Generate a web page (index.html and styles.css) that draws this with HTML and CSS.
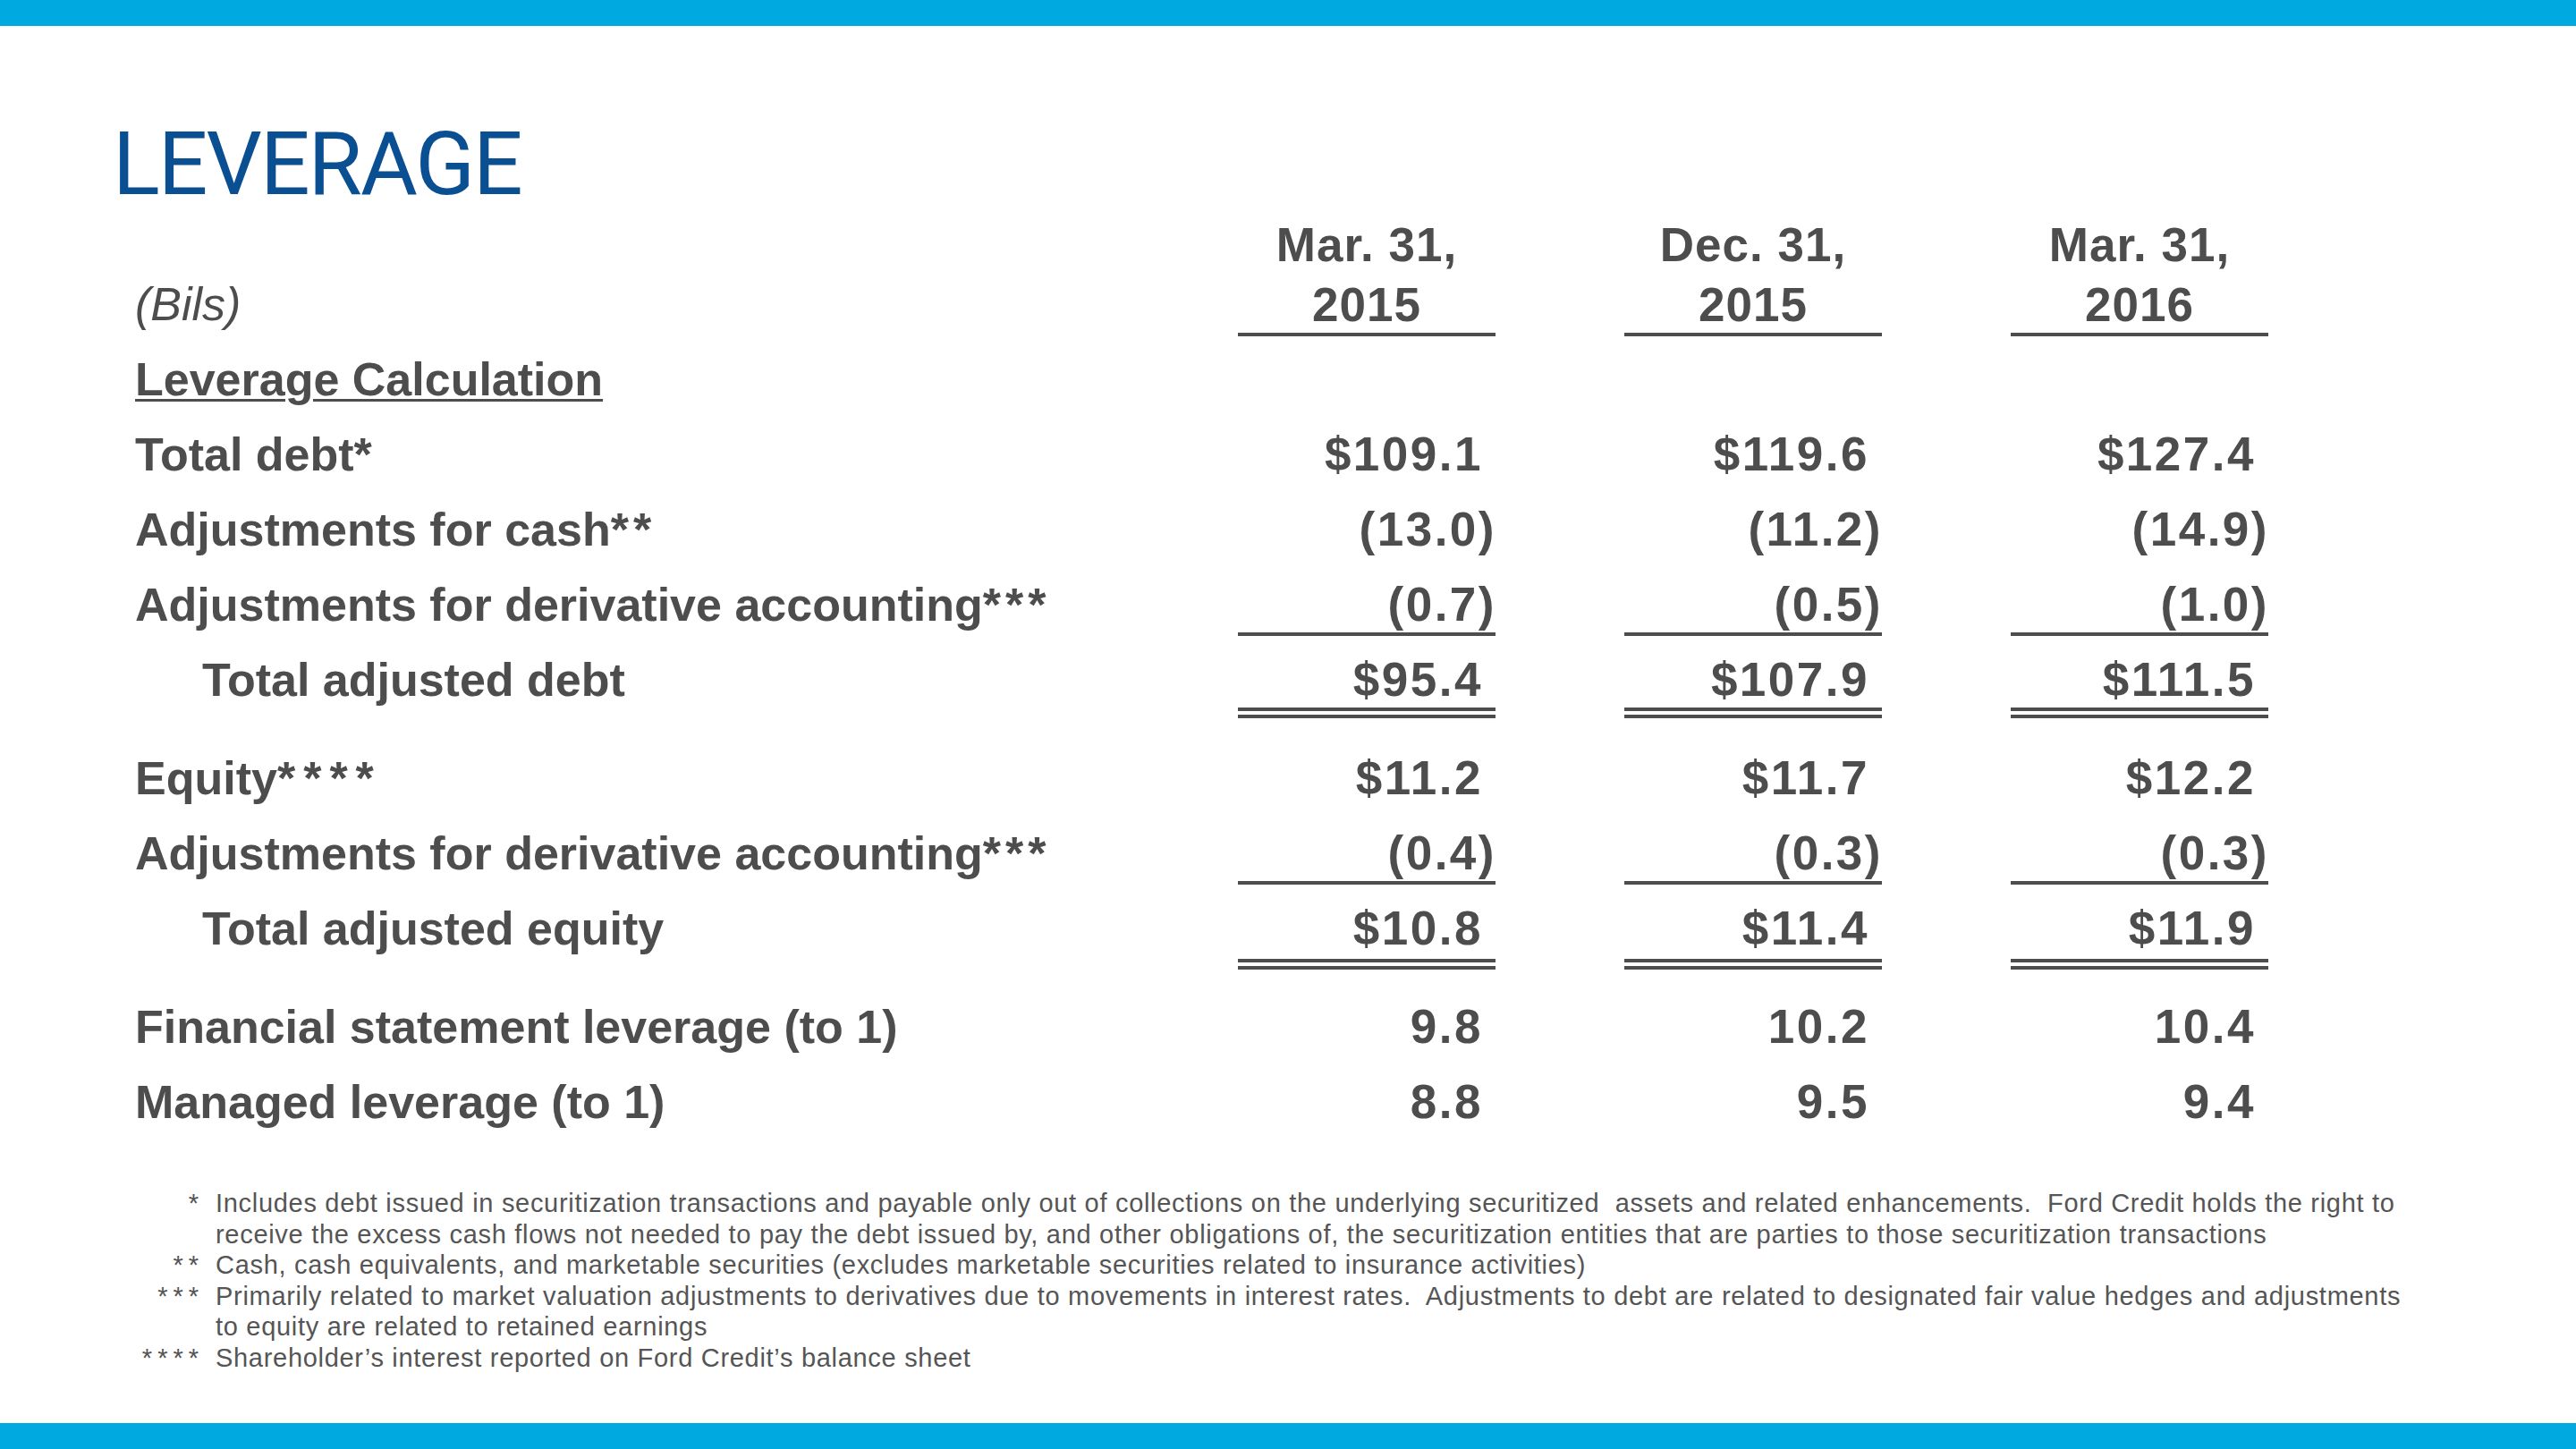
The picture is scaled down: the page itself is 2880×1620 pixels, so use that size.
FILE: index.html
```html
<!DOCTYPE html>
<html lang="en">
<head>
<meta charset="utf-8">
<title>Leverage</title>
<link rel="stylesheet" href="styles.css">
</head>
<body>
<div class="slide">
  <div class="bar"></div>
  <main class="content">
    <h1 class="title">LEVERAGE</h1>
    <div class="table">
      <div class="row head">
        <div class="label unit">(Bils)</div>
        <div class="colhead">Mar. 31,<br>2015</div>
        <div class="colhead">Dec. 31,<br>2015</div>
        <div class="colhead">Mar. 31,<br>2016</div>
      </div>
      <div class="row">
        <div class="label section">Leverage Calculation</div>
      </div>
      <div class="row">
        <div class="label">Total debt<span class="ast">*</span></div>
        <div class="val">$109.1</div>
        <div class="val">$119.6</div>
        <div class="val">$127.4</div>
      </div>
      <div class="row">
        <div class="label">Adjustments for cash<span class="ast">**</span></div>
        <div class="val"><span class="neg">(13.0)</span></div>
        <div class="val"><span class="neg">(11.2)</span></div>
        <div class="val"><span class="neg">(14.9)</span></div>
      </div>
      <div class="row sub">
        <div class="label">Adjustments for derivative accounting<span class="ast">***</span></div>
        <div class="val"><span class="neg">(0.7)</span></div>
        <div class="val"><span class="neg">(0.5)</span></div>
        <div class="val"><span class="neg">(1.0)</span></div>
      </div>
      <div class="row total">
        <div class="label indent">Total adjusted debt</div>
        <div class="val">$95.4</div>
        <div class="val">$107.9</div>
        <div class="val">$111.5</div>
      </div>
      <div class="row">
        <div class="label">Equity<span class="ast wide">****</span></div>
        <div class="val">$11.2</div>
        <div class="val">$11.7</div>
        <div class="val">$12.2</div>
      </div>
      <div class="row sub">
        <div class="label">Adjustments for derivative accounting<span class="ast">***</span></div>
        <div class="val"><span class="neg">(0.4)</span></div>
        <div class="val"><span class="neg">(0.3)</span></div>
        <div class="val"><span class="neg">(0.3)</span></div>
      </div>
      <div class="row total second">
        <div class="label indent">Total adjusted equity</div>
        <div class="val">$10.8</div>
        <div class="val">$11.4</div>
        <div class="val">$11.9</div>
      </div>
      <div class="row">
        <div class="label">Financial statement leverage (to 1)</div>
        <div class="val">9.8</div>
        <div class="val">10.2</div>
        <div class="val">10.4</div>
      </div>
      <div class="row">
        <div class="label">Managed leverage (to 1)</div>
        <div class="val">8.8</div>
        <div class="val">9.5</div>
        <div class="val">9.4</div>
      </div>
    </div>
    <div class="notes">
      <div class="mark">*</div>
      <div class="note">Includes debt issued in securitization transactions and payable only out of collections on the underlying securitized&nbsp; assets and related enhancements.&nbsp; Ford Credit holds the right to<br>receive the excess cash flows not needed to pay the debt issued by, and other obligations of, the securitization entities that are parties to those securitization transactions</div>
      <div class="mark">**</div>
      <div class="note">Cash, cash equivalents, and marketable securities (excludes marketable securities related to insurance activities)</div>
      <div class="mark">***</div>
      <div class="note">Primarily related to market valuation adjustments to derivatives due to movements in interest rates.&nbsp; Adjustments to debt are related to designated fair value hedges and adjustments<br>to equity are related to retained earnings</div>
      <div class="mark">****</div>
      <div class="note">Shareholder’s interest reported on Ford Credit’s balance sheet</div>
    </div>
  </main>
  <div class="bar"></div>
</div>
</body>
</html>
```
FILE: styles.css
```css
html, body {
  margin: 0;
  padding: 0;
}

body {
  width: 2880px;
  height: 1620px;
  overflow: hidden;
  background: #ffffff;
  font-family: "Liberation Sans", Arial, sans-serif;
  color: #4d4d4d;
}

.slide {
  display: flex;
  flex-direction: column;
  height: 1620px;
}

.bar {
  flex: none;
  height: 29px;
  background: #00a9e0;
}

.content {
  flex: 1;
  padding-top: 106px;
}

.title {
  margin: 0 0 7px 126px;
  font-family: Roboto, "Liberation Sans", sans-serif;
  font-weight: 400;
  font-size: 98px;
  line-height: 98px;
  letter-spacing: -2px;
  color: #0b4f93;
}

.table {
  margin-left: 151px;
}

.row {
  display: grid;
  grid-template-columns: 1089px repeat(3, 288px);
  column-gap: 144px;
  height: 84px;
  font-size: 52px;
  line-height: 84px;
  font-weight: 700;
  white-space: nowrap;
}

.row.head {
  height: 136px;
  line-height: 67px;
  margin-bottom: 6px;
}

.colhead {
  height: 132px;
  border-bottom: 4px solid #4d4d4d;
  text-align: center;
  font-size: 53px;
  letter-spacing: 1px;
}

.unit {
  padding-top: 67px;
  font-style: italic;
  font-weight: 400;
  font-size: 52px;
}

.section {
  text-decoration: underline;
  text-decoration-thickness: 3px;
  text-underline-offset: 4px;
}

.indent {
  padding-left: 75px;
}

.ast {
  letter-spacing: 5px;
}

.ast.wide {
  letter-spacing: 9px;
}

.val {
  text-align: right;
  padding-right: 14px;
  font-size: 53px;
  letter-spacing: 2.5px;
}

.neg {
  display: inline-block;
  margin-right: -15px;
}

.row.sub .val {
  height: 73px;
  border-bottom: 4px solid #4d4d4d;
}

.row.total {
  height: auto;
  margin-bottom: 25px;
}

.row.total .val {
  height: 73px;
  border-bottom: 12px double #4d4d4d;
}

.row.total.second {
  margin-bottom: 22px;
}

.row.total.second .val {
  height: 76px;
}

.notes {
  display: grid;
  grid-template-columns: 94px auto;
  column-gap: 19px;
  margin: 54px 0 0 128px;
  font-size: 29px;
  line-height: 34.6px;
  letter-spacing: 0.7px;
  color: #555555;
  white-space: nowrap;
}

.mark {
  text-align: right;
  letter-spacing: 6px;
  margin-right: -6px;
}
```
